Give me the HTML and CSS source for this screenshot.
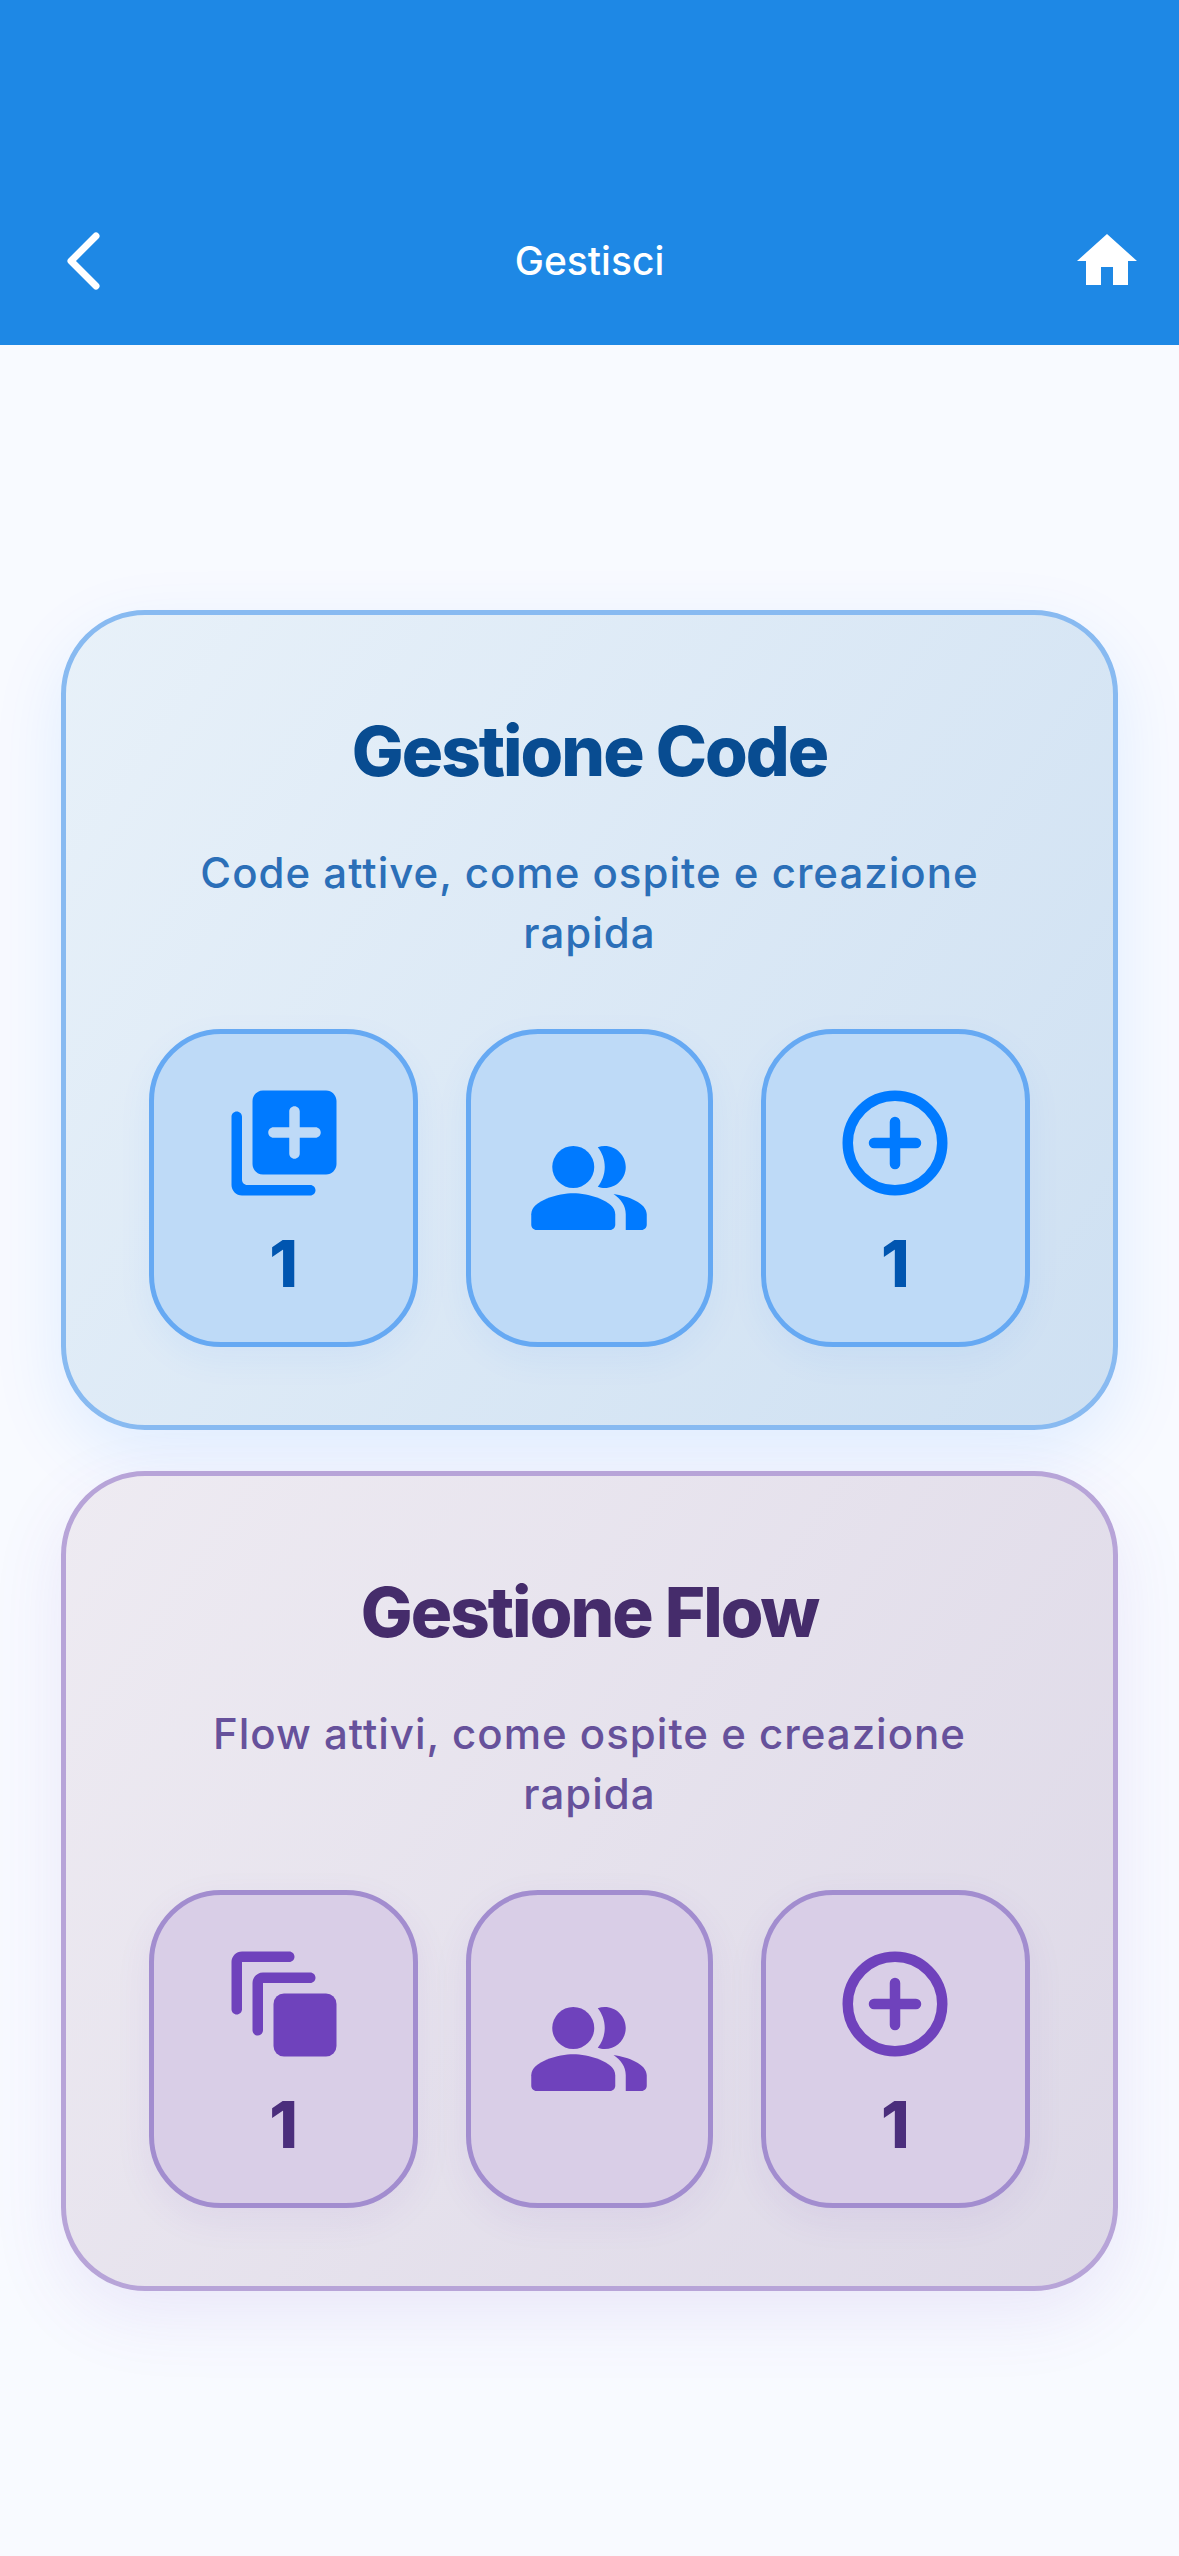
FILE: index.html
```html
<!DOCTYPE html>
<html lang="it">
<head>
  <meta charset="UTF-8" />
  <meta name="viewport" content="width=device-width, initial-scale=1.0"/>
  <title>Gestisci</title>
  <link rel="stylesheet" href="styles.css">
</head>
<body>

  <header class="topbar">
    <button class="nav-btn" aria-label="Indietro">
      <svg viewBox="0 0 72 72" fill="none" stroke="currentColor" stroke-width="7" stroke-linecap="round" stroke-linejoin="round">
        <path d="M60 11L35 36l25 25"/>
      </svg>
    </button>
    <h1>Gestisci</h1>
    <button class="nav-btn" aria-label="Home">
      <svg viewBox="0 0 24 24" fill="currentColor"><path d="M10 20v-6h4v6h5v-8h3L12 3 2 12h3v8z"/></svg>
    </button>
  </header>

  <main class="content">
    <section class="card code">
      <h2>Gestione Code</h2>
      <p>Code attive, come ospite e creazione rapida</p>
      <div class="tiles">
        <button class="tile" aria-label="Code attive: 1">
          <svg viewBox="0 0 24 24" fill="currentColor">
            <path d="M3 6c-.55 0-1 .45-1 1v13c0 1.1.9 2 2 2h13c.55 0 1-.45 1-1s-.45-1-1-1H5c-.55 0-1-.45-1-1V7c0-.55-.45-1-1-1zm17-4H8c-1.1 0-2 .9-2 2v12c0 1.1.9 2 2 2h12c1.1 0 2-.9 2-2V4c0-1.1-.9-2-2-2zm-2 9h-3v3c0 .55-.45 1-1 1s-1-.45-1-1v-3h-3c-.55 0-1-.45-1-1s.45-1 1-1h3V6c0-.55.45-1 1-1s1 .45 1 1v3h3c.55 0 1 .45 1 1s-.45 1-1 1z"/>
          </svg>
          <span>1</span>
        </button>
        <button class="tile" aria-label="Code come ospite">
          <svg viewBox="0 0 24 24" fill="currentColor">
            <circle cx="9" cy="8" r="4"/>
            <path d="M9 13c-2.67 0-8 1.34-8 4v2c0 .55.45 1 1 1h14c.55 0 1-.45 1-1v-2c0-2.66-5.33-4-8-4z"/>
            <path d="M15 12c2.21 0 4-1.79 4-4s-1.79-4-4-4c-.47 0-.91.1-1.33.24C14.5 5.27 15 6.58 15 8s-.5 2.73-1.33 3.76c.42.14.86.24 1.33.24z"/>
            <path d="M16.67 13.13C18.04 14.06 19 15.32 19 17v3h3c.55 0 1-.45 1-1v-2c0-2.18-3.57-3.47-6.33-3.87z"/>
          </svg>
        </button>
        <button class="tile" aria-label="Crea coda: 1">
          <svg viewBox="0 0 24 24" fill="none" stroke="currentColor" stroke-width="2" stroke-linecap="round">
            <circle cx="12" cy="12" r="9"/>
            <path d="M12 8v8M8 12h8"/>
          </svg>
          <span>1</span>
        </button>
      </div>
    </section>

    <section class="card flow">
      <h2>Gestione Flow</h2>
      <p>Flow attivi, come ospite e creazione rapida</p>
      <div class="tiles">
        <button class="tile" aria-label="Flow attivi: 1">
          <svg viewBox="0 0 24 24" fill="currentColor">
            <path d="M13 2H4c-1.1 0-2 .9-2 2v9c0 .55.45 1 1 1s1-.45 1-1V4h9c.55 0 1-.45 1-1s-.45-1-1-1z"/>
            <path d="M17 6H8c-1.1 0-2 .9-2 2v9c0 .55.45 1 1 1s1-.45 1-1V8h9c.55 0 1-.45 1-1s-.45-1-1-1z"/>
            <rect x="10" y="10" width="12" height="12" rx="2"/>
          </svg>
          <span>1</span>
        </button>
        <button class="tile" aria-label="Flow come ospite">
          <svg viewBox="0 0 24 24" fill="currentColor">
            <circle cx="9" cy="8" r="4"/>
            <path d="M9 13c-2.67 0-8 1.34-8 4v2c0 .55.45 1 1 1h14c.55 0 1-.45 1-1v-2c0-2.66-5.33-4-8-4z"/>
            <path d="M15 12c2.21 0 4-1.79 4-4s-1.79-4-4-4c-.47 0-.91.1-1.33.24C14.5 5.27 15 6.58 15 8s-.5 2.73-1.33 3.76c.42.14.86.24 1.33.24z"/>
            <path d="M16.67 13.13C18.04 14.06 19 15.32 19 17v3h3c.55 0 1-.45 1-1v-2c0-2.18-3.57-3.47-6.33-3.87z"/>
          </svg>
        </button>
        <button class="tile" aria-label="Crea flow: 1">
          <svg viewBox="0 0 24 24" fill="none" stroke="currentColor" stroke-width="2" stroke-linecap="round">
            <circle cx="12" cy="12" r="9"/>
            <path d="M12 8v8M8 12h8"/>
          </svg>
          <span>1</span>
        </button>
      </div>
    </section>
  </main>

</body>
</html>
```

FILE: styles.css
```css
* {
  box-sizing: border-box;
}

body {
  margin: 0;
  min-height: 100vh;
  display: flex;
  flex-direction: column;
  font-family: Inter, Roboto, sans-serif;
  background: #f8faff;
}

h1, h2, p {
  margin: 0;
}

button {
  font-family: inherit;
  cursor: pointer;
}

/* top bar */
.topbar {
  display: flex;
  align-items: center;
  justify-content: space-between;
  padding: 177px 36px 0;
  background: #1e88e5;
  color: white;
}

.topbar h1 {
  font-size: 39px;
  line-height: 168px;
  font-weight: 500;
}

.nav-btn {
  width: 72px;
  height: 72px;
  padding: 0;
  border: none;
  background: none;
  color: white;
}

.nav-btn svg {
  display: block;
  width: 100%;
}

/* cards */
.content {
  flex: 1;
  display: flex;
  flex-direction: column;
  justify-content: center;
  gap: 41px;
  padding: 0 61px;
}

.card {
  padding: 94px 83px 78px;
  border: 5px solid;
  border-radius: 84px;
  text-align: center;
}

.card h2 {
  font-size: 69px;
  line-height: 84px;
  font-weight: 800;
  letter-spacing: -2px;
}

.card p {
  margin: 50px 0 66px;
  font-size: 42px;
  line-height: 60px;
  font-weight: 500;
  letter-spacing: 1px;
}

.tiles {
  display: grid;
  grid-template-columns: 12fr 11fr 12fr;
  gap: 48px;
}

.tile {
  display: flex;
  flex-direction: column;
  align-items: center;
  justify-content: center;
  gap: 26px;
  min-height: 318px;
  padding: 0;
  border: 5px solid;
  border-radius: 72px;
}

.tile svg {
  width: 126px;
  height: 126px;
}

.tile span {
  font-size: 65px;
  line-height: 64px;
  font-weight: 800;
}

/* blue */
.code {
  background: linear-gradient(125deg, #e8f1f9, #cee0f2);
  border-color: #88baf1;
  box-shadow: 0 24px 72px rgba(0, 122, 255, 0.1);
}

.code h2 {
  color: #084c91;
}

.code p {
  color: #2b6fb8;
}

.code .tile {
  color: #007aff;
  background: #bedaf7;
  border-color: #66a9f3;
  box-shadow: 0 12px 36px rgba(0, 122, 255, 0.06);
}

.code .tile span {
  color: #0055b0;
}

/* purple */
.flow {
  background: linear-gradient(125deg, #eeebf2, #ddd8e7);
  border-color: #b7a4d8;
  box-shadow: 0 24px 72px rgba(111, 66, 193, 0.1);
}

.flow h2 {
  color: #452c6b;
}

.flow p {
  color: #66519b;
}

.flow .tile {
  color: #6f42bc;
  background: #d9cee7;
  border-color: #a28dcf;
  box-shadow: 0 12px 36px rgba(111, 66, 193, 0.08);
}

.flow .tile span {
  color: #4b2e7c;
}
```
